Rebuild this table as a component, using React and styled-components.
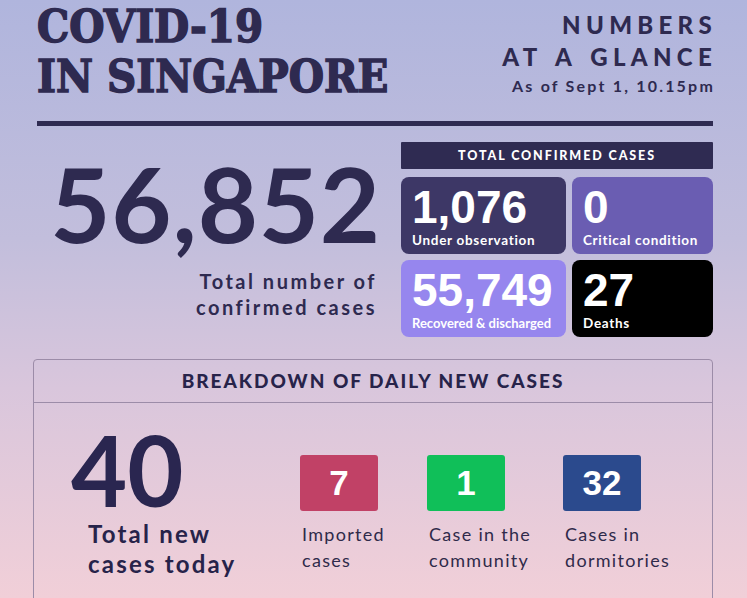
import * as React from "react";
import styled, { createGlobalStyle } from "styled-components";

const GlobalStyle = createGlobalStyle`
  html, body {
    margin: 0;
    padding: 0;
  }
  body {
    min-height: 598px;
    background: linear-gradient(180deg, #b0b5dd 0%, #c2bedc 40%, #d9c6dc 65%, #f1cfd8 100%);
    font-family: "Lato", "Noto Sans", sans-serif;
    color: #2e2a50;
  }
`;

const ink = "#2e2a50";

const Page = styled.div`
  width: 747px;
  height: 598px;
  overflow: hidden;
  box-sizing: border-box;
  padding: 0 34px 0 37px;
`;

const Header = styled.header`
  display: flex;
  justify-content: space-between;
  align-items: flex-start;
  padding-top: 2px;
`;

const Title = styled.h1`
  margin: 0;
  font-family: "DejaVu Serif", "Liberation Serif", serif;
  font-stretch: condensed;
  font-weight: 700;
  font-size: 45px;
  line-height: 50px;
  color: ${ink};
  -webkit-text-stroke: 1.4px ${ink};
`;

const Glance = styled.div`
  text-align: right;
  padding-top: 7px;
`;

const GlanceHeading = styled.h2`
  margin: 0 -4px 0 0;
  font-weight: 900;
  font-size: 24px;
  line-height: 32px;
  letter-spacing: 5.3px;
  word-spacing: 3px;
`;

const Stamp = styled.p`
  margin: 3px -2px 0 0;
  font-weight: 700;
  font-size: 16px;
  letter-spacing: 2.2px;
`;

const Rule = styled.hr`
  border: 0;
  height: 5px;
  background: #2f2b52;
  margin: 19px 0 0;
`;

const Summary = styled.section`
  display: flex;
  margin-top: 16px;
`;

const TotalBlock = styled.div`
  flex: 1;
  text-align: right;
  padding-right: 24px;
`;

const BigNumber = styled.div`
  font-weight: 700;
  font-size: 104px;
  line-height: 104px;
  letter-spacing: 0.8px;
  margin: 9px -4px 0 0;
`;

const TotalLabel = styled.div`
  font-weight: 700;
  font-size: 20px;
  line-height: 26px;
  letter-spacing: 2.5px;
  margin-top: 13px;
`;

const Panel = styled.div`
  width: 312px;
`;

const PanelBar = styled.div`
  height: 27px;
  background: #2f2b52;
  color: #fff;
  font-weight: 900;
  font-size: 12.5px;
  letter-spacing: 1.9px;
  line-height: 28px;
  text-align: center;
  border-radius: 1px;
`;

const CardGrid = styled.div`
  display: grid;
  grid-template-columns: 165px 141px;
  grid-auto-rows: 77px;
  gap: 6px;
  margin-top: 8px;
`;

const Card = styled.div`
  background: ${(p) => p.$bg};
  border-radius: 8px;
  color: #fff;
  padding: 10px 4px 0 11px;
  box-sizing: border-box;
`;

const CardValue = styled.div`
  font-family: "Liberation Sans", Arial, sans-serif;
  font-weight: 700;
  font-size: 46px;
  line-height: 40px;
`;

const CardLabel = styled.div`
  margin-top: 5px;
  font-weight: 700;
  font-size: ${(p) => (p.$long ? 13 : 13.5)}px;
  line-height: 16px;
  letter-spacing: ${(p) => (p.$long ? 0 : 0.7)}px;
  white-space: nowrap;
`;

const Breakdown = styled.section`
  margin: 22px 0 0 -4px;
  border: 1px solid #9c8ca8;
  border-radius: 4px;
  height: 300px;
`;

const BreakdownHead = styled.h3`
  margin: 0;
  height: 42px;
  line-height: 42px;
  border-bottom: 1px solid #9c8ca8;
  text-align: center;
  font-weight: 900;
  font-size: 19px;
  letter-spacing: 2px;
  color: #27234a;
`;

const BreakdownBody = styled.div`
  display: flex;
  align-items: flex-start;
  padding: 18px 0 0 37px;
`;

const NewTotal = styled.div`
  width: 229px;
`;

const NewNumber = styled.div`
  font-weight: 700;
  font-size: 97px;
  line-height: 97px;
  color: #2a2650;
`;

const NewLabel = styled.div`
  font-weight: 700;
  font-size: 24px;
  line-height: 30px;
  letter-spacing: 2.2px;
  margin: 1px 0 0 17px;
  color: #27234a;
`;

const Types = styled.div`
  display: flex;
  padding-top: 34px;
`;

const Type = styled.div`
  width: ${(p) => p.$w}px;
`;

const TypeBox = styled.div`
  width: 78px;
  height: 56px;
  border-radius: 3px;
  background: ${(p) => p.$bg};
  color: #fff;
  display: flex;
  align-items: center;
  justify-content: center;
  font-family: "Liberation Sans", Arial, sans-serif;
  font-weight: 700;
  font-size: 35px;
`;

const TypeLabel = styled.div`
  font-size: 18px;
  line-height: 26px;
  letter-spacing: 1.3px;
  margin: 10px 0 0 2px;
  color: #2f2a4a;
`;

const cards = [
  { value: "1,076", label: "Under observation", bg: "#3d3766" },
  { value: "0", label: "Critical condition", bg: "#6a5db2" },
  { value: "55,749", label: "Recovered & discharged", bg: "#9686ee", long: true },
  { value: "27", label: "Deaths", bg: "#000000" },
];

const types = [
  { value: "7", label: ["Imported", "cases"], bg: "#c14166", w: 127 },
  { value: "1", label: ["Case in the", "community"], bg: "#10bf59", w: 136 },
  { value: "32", label: ["Cases in", "dormitories"], bg: "#2b4a8d", w: 120 },
];

const App = () => {
  return (
    <>
      <GlobalStyle />
      <Page>
        <Header>
          <Title>
            COVID-19
            <br />
            IN SINGAPORE
          </Title>
          <Glance>
            <GlanceHeading>
              NUMBERS
              <br />
              AT A GLANCE
            </GlanceHeading>
            <Stamp>As of Sept 1, 10.15pm</Stamp>
          </Glance>
        </Header>
        <Rule />
        <Summary>
          <TotalBlock>
            <BigNumber>56,852</BigNumber>
            <TotalLabel>
              Total number of
              <br />
              confirmed cases
            </TotalLabel>
          </TotalBlock>
          <Panel>
            <PanelBar>TOTAL CONFIRMED CASES</PanelBar>
            <CardGrid>
              {cards.map((c) => (
                <Card key={c.label} $bg={c.bg}>
                  <CardValue>{c.value}</CardValue>
                  <CardLabel $long={c.long}>{c.label}</CardLabel>
                </Card>
              ))}
            </CardGrid>
          </Panel>
        </Summary>
        <Breakdown>
          <BreakdownHead>BREAKDOWN OF DAILY NEW CASES</BreakdownHead>
          <BreakdownBody>
            <NewTotal>
              <NewNumber>40</NewNumber>
              <NewLabel>
                Total new
                <br />
                cases today
              </NewLabel>
            </NewTotal>
            <Types>
              {types.map((t) => (
                <Type key={t.value} $w={t.w}>
                  <TypeBox $bg={t.bg}>{t.value}</TypeBox>
                  <TypeLabel>
                    {t.label[0]}
                    <br />
                    {t.label[1]}
                  </TypeLabel>
                </Type>
              ))}
            </Types>
          </BreakdownBody>
        </Breakdown>
      </Page>
    </>
  );
};

export default App;
